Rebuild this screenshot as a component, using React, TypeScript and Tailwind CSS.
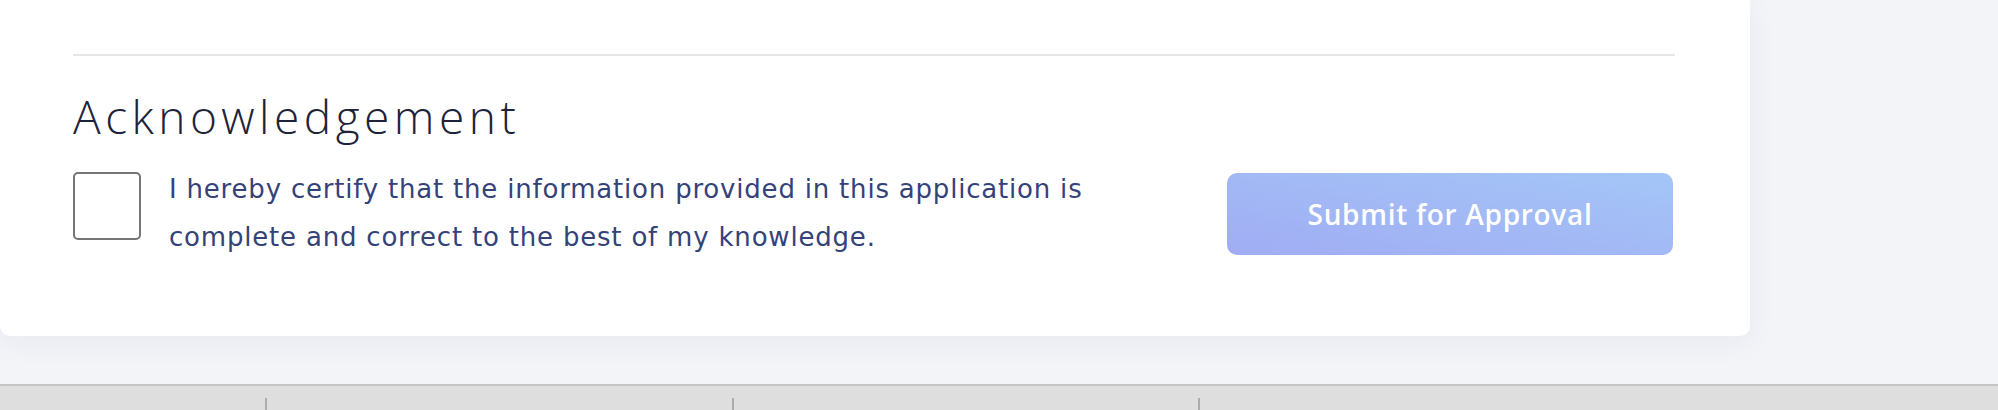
import React from 'react';

export default function App() {
  return (
    <div className="w-[1998px] h-[410px] bg-[#f3f4f8] flex flex-col overflow-hidden font-['Open_Sans',sans-serif]">
      <div className="flex-1 flex items-start">
        <div className="w-[1750px] h-[336px] bg-white rounded-b-[10px] shadow-[0_6px_30px_rgba(30,40,90,0.05)] pl-[73px] pr-[75px] pt-[54px]">
          <div className="h-[2px] bg-[#e6e6e6]" />

          {/* Acknowledgement */}
          <h2 className="mt-[37px] text-[46px] leading-[46px] font-light text-[#1d2338] tracking-[4.5px]">
            Acknowledgement
          </h2>

          <div className="mt-[26px] flex items-start justify-between pr-[2px]">
            <label className="flex items-start gap-[28px]">
              <span className="mt-[7px] w-[68px] h-[68px] shrink-0 rounded-[5px] border-2 border-[#757575] bg-white" />
              <span className="font-['DejaVu_Sans',sans-serif] text-[26px] leading-[48px] tracking-[0.8px] text-[#34427a]">
                I hereby certify that the information provided in this application is
                <br />
                complete and correct to the best of my knowledge.
              </span>
            </label>
            <button
              disabled
              className="mt-[8px] w-[446px] h-[82px] rounded-[10px] bg-gradient-to-tr from-[#a0acf3] to-[#a4c6f7] text-white text-[28px] font-semibold tracking-[0.7px]"
            >
              Submit for Approval
            </button>
          </div>
        </div>
      </div>

      {/* Bottom bar */}
      <div className="h-[2px] bg-[#c4c4c4]" />
      <div className="h-[24px] bg-[#dedede] flex items-end">
        <div className="w-[267px] h-[12px] border-r-2 border-[#acacac]" />
        <div className="w-[467px] h-[12px] border-r-2 border-[#acacac]" />
        <div className="w-[466px] h-[12px] border-r-2 border-[#acacac]" />
      </div>
    </div>
  );
}
